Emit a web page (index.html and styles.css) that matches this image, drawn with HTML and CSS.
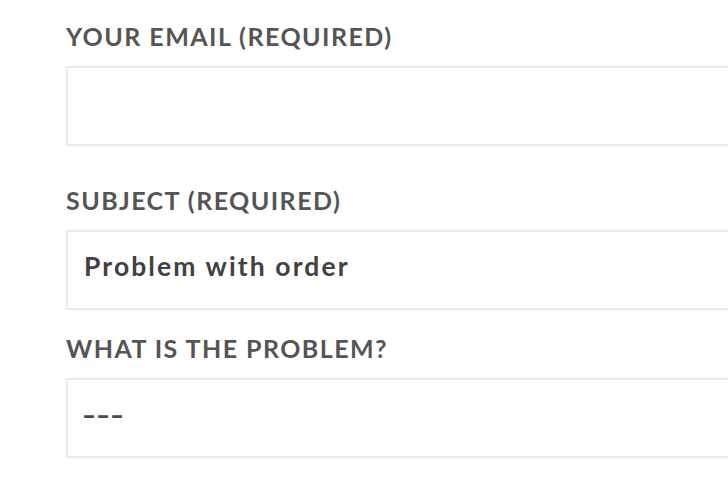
FILE: index.html
```html
<!DOCTYPE html>
<html lang="en">
<head>
<meta charset="utf-8">
<title>Contact form</title>
<link rel="stylesheet" href="styles.css">
</head>
<body>
<form class="form">
  <div class="field field-first">
    <label class="label" for="email">YOUR EMAIL (REQUIRED)</label>
    <input class="control" id="email" type="email" value="">
  </div>
  <div class="field field-second">
    <label class="label" for="subject">SUBJECT (REQUIRED)</label>
    <input class="control" id="subject" type="text" value="Problem with order">
  </div>
  <div class="field">
    <label class="label" for="problem">WHAT IS THE PROBLEM?</label>
    <div class="control select" id="problem"><span class="dashes">---</span></div>
  </div>
</form>
</body>
</html>
```
FILE: styles.css
```css
html, body {
  margin: 0;
  padding: 0;
  background: #ffffff;
  overflow: hidden;
}
.form {
  padding: 21px 0 0 66px;
  font-family: Lato, "Open Sans", sans-serif;
}
.field {
  display: flex;
  flex-direction: column;
  width: 720px;
}
.field-first {
  margin-bottom: 39px;
}
.field-second {
  margin-bottom: 23px;
}
.label {
  font-size: 25px;
  line-height: 30px;
  font-weight: 700;
  letter-spacing: 1.45px;
  color: #555555;
  margin-bottom: 15px;
}
.control {
  box-sizing: border-box;
  height: 80px;
  width: 100%;
  border: 2px solid #ebebeb;
  border-radius: 0;
  background: #ffffff;
  padding: 19px 15px 27px 16px;
  font-family: Lato, "Open Sans", sans-serif;
  font-size: 26.5px;
  line-height: 30px;
  font-weight: 700;
  letter-spacing: 2.1px;
  color: #414141;
  outline: none;
  margin: 0;
}
.select {
  display: flex;
  align-items: flex-start;
}
.dashes {
  display: inline-block;
  letter-spacing: 0;
  margin-left: -2px;
  margin-top: 1px;
  transform: scaleX(1.42);
  transform-origin: left center;
  color: #4a4a4a;
}
```
